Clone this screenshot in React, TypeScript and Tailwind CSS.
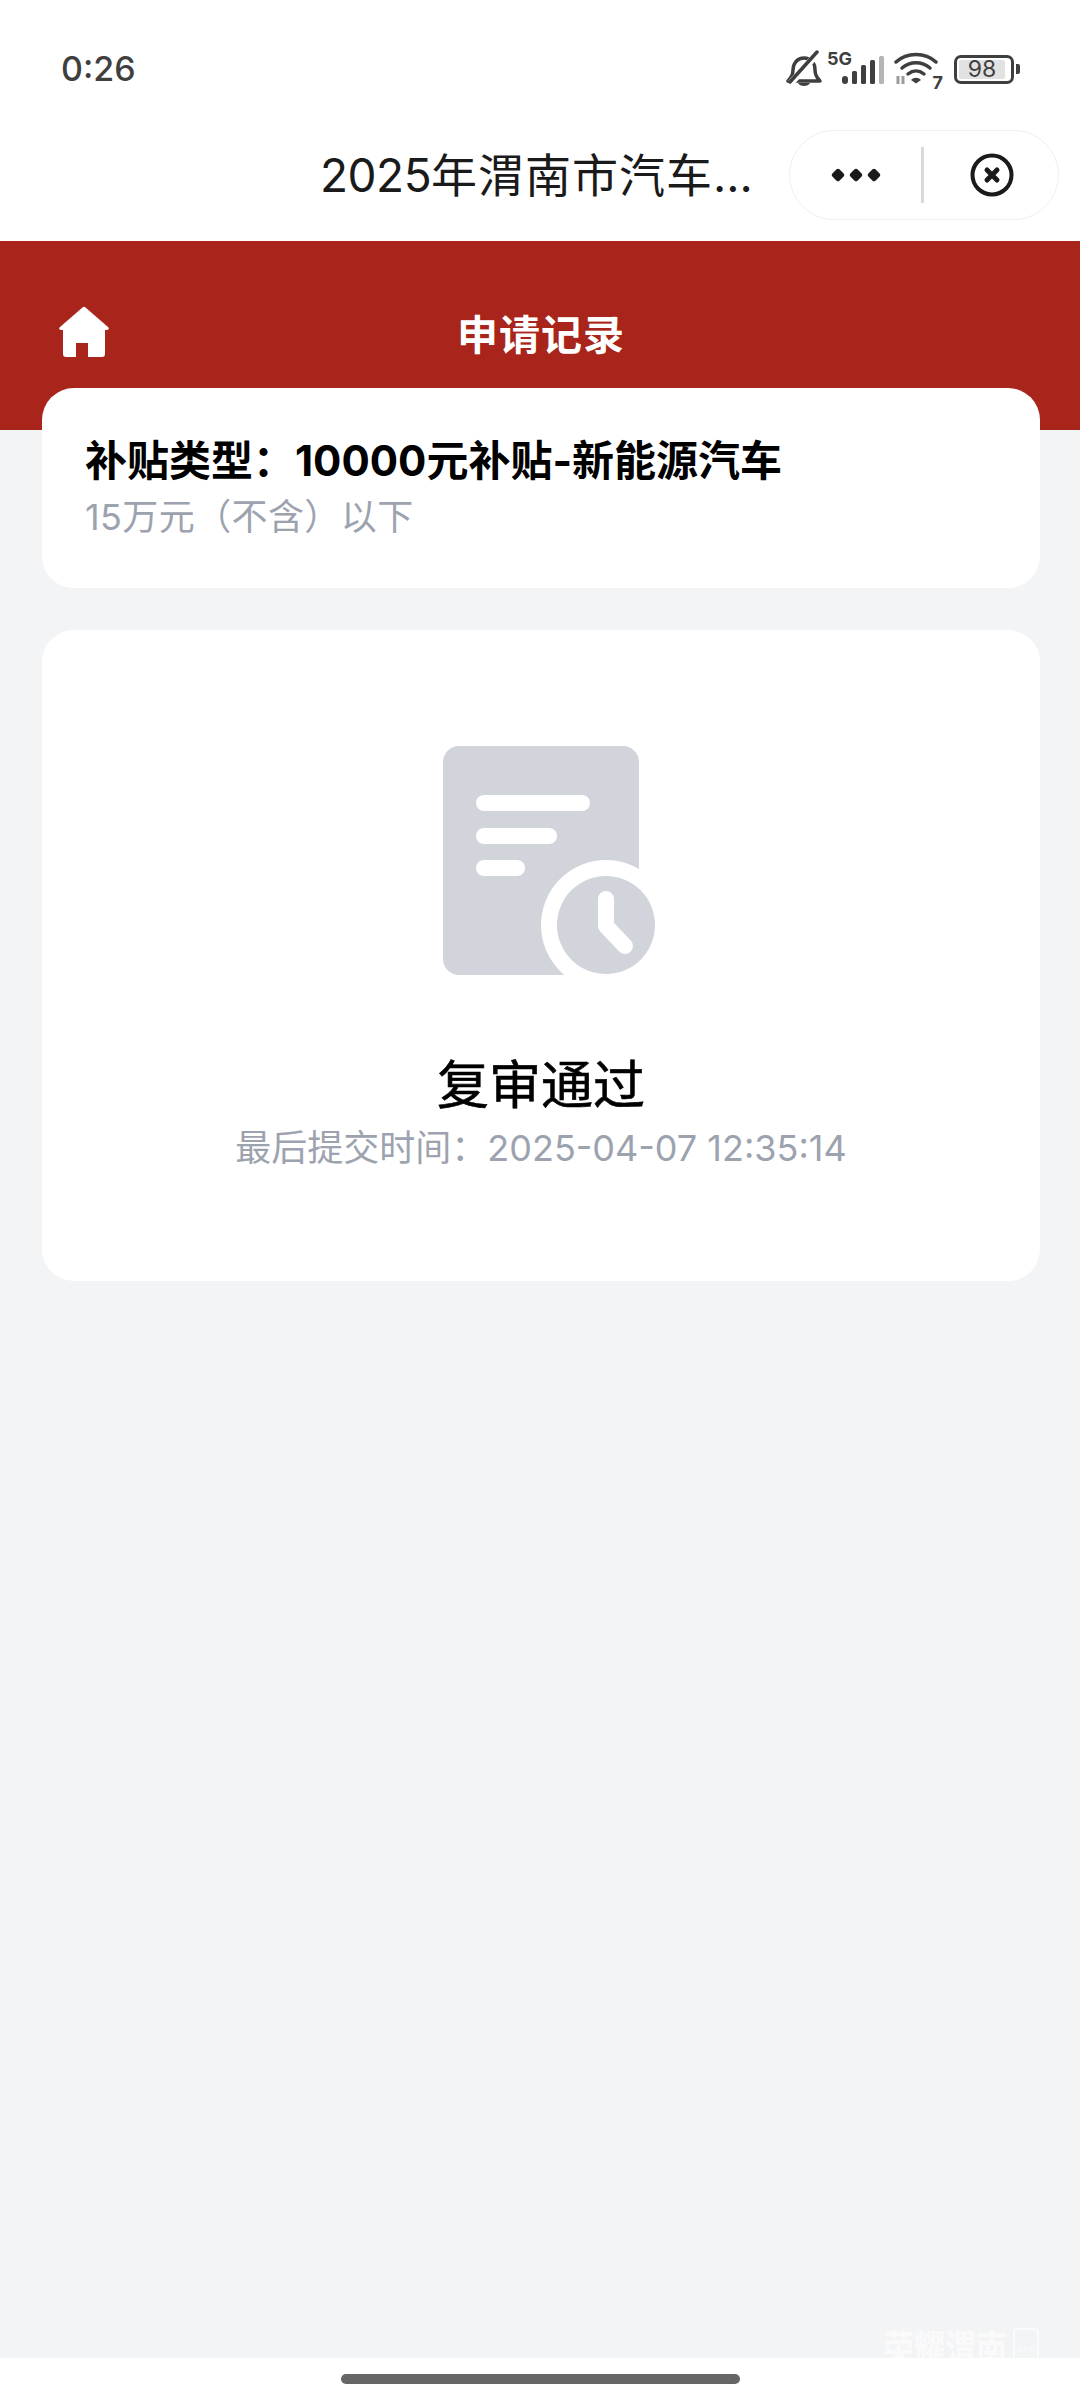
const latin = "font-['Inter','Noto_Sans_CJK_SC',sans-serif]";

const StatusIcons = () => (
  <div className="flex items-center text-[#3f3f3f]">
    <svg width="36" height="38" viewBox="0 0 36 38" fill="none" className="mr-[5px]">
      <path d="M2 31h32c-3-3-5-6-5-11 0-7-4-12-11-12-3 0-6 1.200-8 3.500C8 14 7 17 7 20c0 5-2 8-5 11Z" stroke="currentColor" strokeWidth="3.500" strokeLinejoin="round" />
      <path d="M5 33 32 3" stroke="#fff" strokeWidth="7" />
      <path d="M4 32 31 2" stroke="currentColor" strokeWidth="3.500" strokeLinecap="round" />
      <path d="M12 33h12c-1 2-3.500 3-6 3s-5-1-6-3Z" fill="currentColor" />
    </svg>
    <div className="relative w-[58px] h-[34px]">
      <span className={`${latin} absolute left-0 top-[-5px] text-[18px] font-bold leading-[24px]`}>5G</span>
      <svg width="42" height="28" viewBox="0 0 42 28" className="absolute left-[15px] top-[4px]">
        <rect x="0" y="20" width="6" height="8" rx="3" fill="currentColor" />
        <rect x="10" y="15" width="5" height="13" rx="1.500" fill="currentColor" />
        <rect x="19" y="9" width="5" height="19" rx="1.500" fill="currentColor" />
        <rect x="28" y="4" width="5" height="24" rx="1.500" fill="currentColor" />
        <rect x="37" y="0" width="5" height="28" rx="1.500" fill="#b5b5b5" />
      </svg>
    </div>
    <div className="relative w-[46px] h-[36px] ml-[9px]">
      <svg width="44" height="34" viewBox="0 0 44 34" fill="none" className="absolute left-0 top-0">
        <path d="M2 11C13 1 31 1 42 11" stroke="currentColor" strokeWidth="3.500" strokeLinecap="round" />
        <path d="M8 17c8-7 20-7 28 0" stroke="currentColor" strokeWidth="3.500" strokeLinecap="round" />
        <path d="M14 23c5-4 11-4 16 0" stroke="currentColor" strokeWidth="3.500" strokeLinecap="round" />
        <path d="M17 29c3-3 7-3 10 0l-5 3.500Z" fill="currentColor" />
        <path d="M4 25v8M9 33v-8" stroke="#9a9a9a" strokeWidth="3" />
      </svg>
      <span className={`${latin} absolute right-[-3px] bottom-[-5px] text-[18px] font-bold leading-[18px]`}>7</span>
    </div>
    <div className="ml-[14px] flex items-center">
      <div className="w-[60px] h-[29px] rounded-[7px] border-[3px] border-[#3f3f3f] p-[2px]">
        <div className="w-[92%] h-full rounded-[2px] bg-[#e2e2e2] flex items-center justify-center">
          <span className={`${latin} text-[23px] leading-none font-normal`}>98</span>
        </div>
      </div>
      <div className="ml-[2px] w-[4px] h-[10px] rounded-r-[2px] bg-[#3f3f3f]" />
    </div>
  </div>
);

const Capsule = () => (
  <div className="w-[270px] h-[90px] rounded-full border border-[#efefef] bg-white flex items-center">
    <div className="flex-1 flex items-center justify-center gap-[4px]">
      <span className="w-[14px] h-[14px] flex items-center justify-center"><span className="w-[10px] h-[10px] rotate-45 rounded-[2px] bg-[#1a1a1a]" /></span>
      <span className="w-[14px] h-[14px] flex items-center justify-center"><span className="w-[10px] h-[10px] rotate-45 rounded-[2px] bg-[#1a1a1a]" /></span>
      <span className="w-[14px] h-[14px] flex items-center justify-center"><span className="w-[10px] h-[10px] rotate-45 rounded-[2px] bg-[#1a1a1a]" /></span>
    </div>
    <div className="w-[3px] h-[56px] bg-[#d9d9d9]" />
    <div className="w-[134px] flex items-center justify-center pl-[2px]">
      <svg width="44" height="44" viewBox="0 0 44 44" fill="none">
        <circle cx="22" cy="22" r="19.500" stroke="#1a1a1a" strokeWidth="4" />
        <path d="M17 17l10 10M27 17 17 27" stroke="#1a1a1a" strokeWidth="5" strokeLinecap="round" />
      </svg>
    </div>
  </div>
);

const RecordIcon = () => (
  <svg width="214" height="230" viewBox="0 0 214 230" fill="none">
    <rect x="0" y="0" width="196" height="229" rx="16" fill="#d1d5db" />
    <rect x="33" y="49" width="114" height="16" rx="8" fill="#fff" />
    <rect x="33" y="82" width="81" height="16" rx="8" fill="#fff" />
    <rect x="33" y="114" width="49" height="16" rx="8" fill="#fff" />
    <circle cx="163" cy="179" r="65" fill="#fff" />
    <circle cx="163" cy="179" r="49" fill="#d1d5db" />
    <path d="M163 153v27l19 20" stroke="#fff" strokeWidth="16" strokeLinecap="round" strokeLinejoin="round" />
  </svg>
);

export default function App() {
  return (
    <div className={`${latin} relative w-[1080px] h-[2400px] bg-white overflow-hidden flex flex-col`}>
      {/* status bar */}
      <div className="h-[120px] pt-[18px] pl-[61px] pr-[60px] flex items-center justify-between shrink-0">
        <span className="text-[34px] font-medium leading-none text-[#3f3f3f]">0:26</span>
        <StatusIcons />
      </div>
      {/* mini program nav */}
      <div className="h-[121px] flex items-center shrink-0 pb-[11px]">
        <div className="ml-[320px] w-[440px] text-[46px] leading-[60px] tracking-[1px] text-[#1a1a1a] whitespace-nowrap">
          <span className="tracking-[-0.5px]">2025</span>年渭南市汽车…
        </div>
        <div className="ml-[29px]"><Capsule /></div>
      </div>

      <div className="flex-1 bg-[#f3f4f6]">
        <div className="relative h-[189px] bg-[#a9241a] flex items-center justify-center">
          <svg width="50" height="52" viewBox="0 0 50 52" className="absolute left-[59px] top-[65px]">
            <path d="M23.500 1.500c1-1 2-1 3 0L49 21c1.500 1.500.8 3-1 3h-2v24c0 2-1 3-3 3H29V37H17v14H7c-2 0-3-1-3-3V24H2c-1.800 0-2.500-1.500-1-3Z" fill="#fff" />
          </svg>
          <span className="text-[41px] font-bold leading-none text-white ml-[2px] tracking-[1px]">申请记录</span>
        </div>

        <div className="pl-[42px] pr-[40px] -mt-[42px] relative flex flex-col gap-[42px]">
          <div className="h-[200px] rounded-[32px] bg-white pl-[43px] pt-[49px]">
            <div className="text-[42px] font-bold leading-[48px] text-black">补贴类型：10000元补贴-新能源汽车</div>
            <div className="text-[36px] leading-[42px] mt-[11px] tracking-[0.4px] text-[#9ca3af]">15万元（不含）以下</div>
          </div>
          <div className="h-[651px] rounded-[32px] bg-white flex flex-col items-center pt-[116px]">
            <div className="ml-[18px]"><RecordIcon /></div>
            <div className="text-[52px] leading-[60px] text-black mt-[80px] [-webkit-text-stroke:0.6px_black]">复审通过</div>
            <div className="text-[36px] leading-[44px] text-[#9ca3af] mt-[10px]">最后提交时间：2025-04-07 12:35:14</div>
          </div>
        </div>
      </div>

      {/* home indicator */}
      <div className="h-[42px] flex items-center justify-center shrink-0 bg-white">
        <div className="w-[399px] h-[10px] rounded-full bg-[#666666]" />
      </div>

      {/* watermark */}
      <div className="absolute right-[41px] bottom-[30px] flex items-center gap-[6px] text-white/60 pointer-events-none">
        <span className="text-[31px] font-bold leading-none scale-y-[1.3]">荣耀渭南</span>
        <div className="w-[26px] h-[42px] rounded-[5px] border-2 border-white/60 flex items-center justify-center">
          <span className="text-[9px] leading-none">APP</span>
        </div>
      </div>
    </div>
  );
}
